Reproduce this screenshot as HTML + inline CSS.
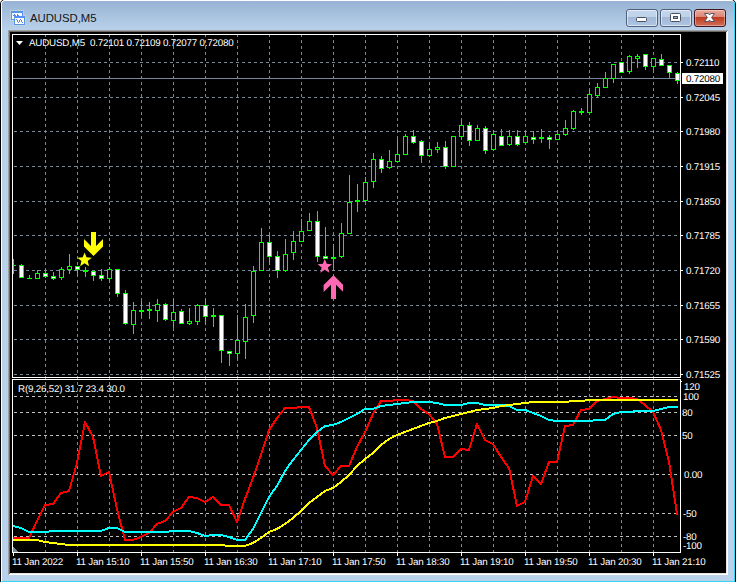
<!DOCTYPE html>
<html><head><meta charset="utf-8"><title>AUDUSD,M5</title>
<style>
html,body{margin:0;padding:0;background:#fff;}
body{width:738px;height:582px;position:relative;overflow:hidden;font-family:"Liberation Sans",sans-serif;}
.abs{position:absolute;}
#win{position:absolute;left:0;top:-1px;width:736px;height:590px;box-sizing:border-box;border:1px solid #000;border-radius:5px 5px 0 0;background:#b9d1ea;overflow:hidden;}
#hl{position:absolute;left:0;top:0;width:734px;height:582px;box-sizing:border-box;border-left:1px solid #fff;border-top:1px solid #fff;border-right:1px solid #33d6f5;border-bottom:1px solid #33d6f5;border-radius:4px 4px 0 0;}
#cap{position:absolute;left:1px;top:1px;width:732px;height:29px;background:linear-gradient(#97b2d2,#9ab6d6 8%,#b9d1ea 100%);border-radius:3px 3px 0 0;}
.t{position:absolute;font-size:9.8px;letter-spacing:-0.2px;line-height:11px;height:11px;margin-top:-1px;white-space:pre;text-rendering:geometricPrecision;}
#title{position:absolute;left:30px;top:11px;font-size:11.3px;line-height:14px;color:#151515;white-space:pre;}
.btn{position:absolute;top:9px;width:32px;height:18px;box-sizing:border-box;border:1px solid #505f7c;border-radius:3px;background:linear-gradient(#c3d6ec 0,#bdd1e8 45%,#a1b9d7 46%,#aec6e1 100%);box-shadow:inset 0 0 0 1px rgba(255,255,255,.55);}
#bclose{border-color:#431422;background:linear-gradient(#e9a99b 0,#dc8573 45%,#c03a1e 46%,#cf6e57 100%);box-shadow:inset 0 0 0 1px rgba(255,255,255,.35);}
</style></head><body>
<div id="win"><div id="cap"></div><div id="hl"></div></div>
<!-- icon -->
<svg class="abs" style="left:9px;top:9px" width="18" height="18" viewBox="9 9 18 18" shape-rendering="crispEdges">
<rect x="10" y="10" width="14" height="11" fill="#c5d8ef" opacity=".6"/>
<rect x="13" y="15" width="13" height="11" fill="#c5d8ef" opacity=".6"/>
<rect x="11" y="11" width="12" height="9" rx="1" fill="#5a90fa"/><path d="M12 11.5h10M14 16.5h0" stroke="#53a58c" stroke-dasharray="1 2" fill="none"/>
<rect x="12" y="13" width="10" height="6" fill="#fff"/>
<rect x="14" y="16" width="11" height="9" rx="1" fill="#5a90fa"/><path d="M15 16.5h9M15 24.500h9" stroke="#53a58c" stroke-dasharray="1 2" fill="none"/><path d="M14.5 18v6M24.500 18v6M11.5 13v6" stroke="#53a58c" stroke-dasharray="1 2" fill="none"/>
<rect x="15" y="18" width="9" height="6" fill="#fff"/>
<path d="M13 15.5h3M14 14.5h1M17 14.5h1M17 15.5h2M18 16.5h2" stroke="#4f86f7" fill="none"/>
<path d="M16 19.5h1M17 20.5h1M17 21.5h1M18 22.5h1M19 21.5h1M19 20.5h1M20 19.5h1M21 20.5h1M21 21.5h1M22 22.5h1" stroke="#4f86f7" fill="none"/>
</svg>
<div id="title">AUDUSD,M5</div>
<div class="btn" style="left:626px"></div>
<div class="btn" style="left:660px"></div>
<div class="btn" id="bclose" style="left:694px"></div>
<svg class="abs" style="left:626px;top:9px" width="100" height="18" viewBox="626 9 100 18">
<rect x="636.5" y="17.5" width="10" height="4" rx="1" fill="#fff" stroke="#4a4f5c"/>
<rect x="670.5" y="13.5" width="10" height="8" rx="1" fill="#fff" stroke="#4a4f5c"/>
<rect x="673.5" y="16.5" width="4" height="2" fill="#8fb0d6" stroke="#4a4f5c"/>
<path d="M704.5 13.5H708.300L709.5 15 710.7 13.5H714.500L711.6 17.5 714.500 21.5H710.700L709.5 20 708.3 21.5H704.500L707.4 17.5Z" fill="#fff" stroke="#4a475c" stroke-width="0.9" stroke-linejoin="round"/>
</svg>
<!-- client edge -->
<div class="abs" style="left:8px;top:30px;width:720px;height:545px;background:#a0a0a0"></div>
<div class="abs" style="left:9px;top:31px;width:719px;height:544px;background:#fff"></div>
<div class="abs" style="left:9px;top:31px;width:718px;height:543px;background:#696969"></div>
<div class="abs" style="left:10px;top:32px;width:717px;height:542px;background:#e3e3e3"></div>
<div class="abs" style="left:10px;top:32px;width:716px;height:541px;background:#000"></div>
<svg class="abs" style="left:0;top:0" width="738" height="582" viewBox="0 0 738 582" shape-rendering="crispEdges">
<line x1="45.5" y1="34" x2="45.5" y2="552" stroke="#778899" stroke-dasharray="3 3"/>
<line x1="77.5" y1="34" x2="77.5" y2="552" stroke="#778899" stroke-dasharray="3 3"/>
<line x1="109.5" y1="34" x2="109.5" y2="552" stroke="#778899" stroke-dasharray="3 3"/>
<line x1="141.5" y1="34" x2="141.5" y2="552" stroke="#778899" stroke-dasharray="3 3"/>
<line x1="173.5" y1="34" x2="173.5" y2="552" stroke="#778899" stroke-dasharray="3 3"/>
<line x1="205.5" y1="34" x2="205.5" y2="552" stroke="#778899" stroke-dasharray="3 3"/>
<line x1="237.5" y1="34" x2="237.5" y2="552" stroke="#778899" stroke-dasharray="3 3"/>
<line x1="269.5" y1="34" x2="269.5" y2="552" stroke="#778899" stroke-dasharray="3 3"/>
<line x1="301.5" y1="34" x2="301.5" y2="552" stroke="#778899" stroke-dasharray="3 3"/>
<line x1="333.5" y1="34" x2="333.5" y2="552" stroke="#778899" stroke-dasharray="3 3"/>
<line x1="365.5" y1="34" x2="365.5" y2="552" stroke="#778899" stroke-dasharray="3 3"/>
<line x1="397.5" y1="34" x2="397.5" y2="552" stroke="#778899" stroke-dasharray="3 3"/>
<line x1="429.5" y1="34" x2="429.5" y2="552" stroke="#778899" stroke-dasharray="3 3"/>
<line x1="461.5" y1="34" x2="461.5" y2="552" stroke="#778899" stroke-dasharray="3 3"/>
<line x1="493.5" y1="34" x2="493.5" y2="552" stroke="#778899" stroke-dasharray="3 3"/>
<line x1="525.5" y1="34" x2="525.5" y2="552" stroke="#778899" stroke-dasharray="3 3"/>
<line x1="557.5" y1="34" x2="557.5" y2="552" stroke="#778899" stroke-dasharray="3 3"/>
<line x1="589.5" y1="34" x2="589.5" y2="552" stroke="#778899" stroke-dasharray="3 3"/>
<line x1="621.5" y1="34" x2="621.5" y2="552" stroke="#778899" stroke-dasharray="3 3"/>
<line x1="653.5" y1="34" x2="653.5" y2="552" stroke="#778899" stroke-dasharray="3 3"/>
<line x1="14" y1="62.5" x2="680" y2="62.5" stroke="#778899" stroke-dasharray="3 3"/>
<line x1="14" y1="97.5" x2="680" y2="97.5" stroke="#778899" stroke-dasharray="3 3"/>
<line x1="14" y1="131.5" x2="680" y2="131.5" stroke="#778899" stroke-dasharray="3 3"/>
<line x1="14" y1="166.5" x2="680" y2="166.5" stroke="#778899" stroke-dasharray="3 3"/>
<line x1="14" y1="201.5" x2="680" y2="201.5" stroke="#778899" stroke-dasharray="3 3"/>
<line x1="14" y1="235.5" x2="680" y2="235.5" stroke="#778899" stroke-dasharray="3 3"/>
<line x1="14" y1="270.5" x2="680" y2="270.5" stroke="#778899" stroke-dasharray="3 3"/>
<line x1="14" y1="305.5" x2="680" y2="305.5" stroke="#778899" stroke-dasharray="3 3"/>
<line x1="14" y1="339.5" x2="680" y2="339.5" stroke="#778899" stroke-dasharray="3 3"/>
<line x1="14" y1="374.5" x2="680" y2="374.5" stroke="#778899" stroke-dasharray="3 3"/>
<line x1="14" y1="396.5" x2="680" y2="396.5" stroke="#c0c0c0" stroke-dasharray="3 3"/>
<line x1="14" y1="412.5" x2="680" y2="412.5" stroke="#c0c0c0" stroke-dasharray="3 3"/>
<line x1="14" y1="435.5" x2="680" y2="435.5" stroke="#c0c0c0" stroke-dasharray="3 3"/>
<line x1="14" y1="474.5" x2="680" y2="474.5" stroke="#c0c0c0" stroke-dasharray="3 3"/>
<line x1="14" y1="513.5" x2="680" y2="513.5" stroke="#c0c0c0" stroke-dasharray="3 3"/>
<line x1="14" y1="536.5" x2="680" y2="536.5" stroke="#c0c0c0" stroke-dasharray="3 3"/>
<rect x="13" y="78" width="667" height="1" fill="#778899"/>
<rect x="13" y="259" width="1" height="15" fill="#00ff00"/>
<rect x="13" y="265" width="3" height="1" fill="#00ff00"/>
<rect x="21" y="264" width="1" height="14" fill="#00ff00"/>
<rect x="19" y="265" width="5" height="13" fill="#00ff00"/>
<rect x="20" y="266" width="3" height="11" fill="#ffffff"/>
<rect x="29" y="275" width="1" height="4" fill="#00ff00"/>
<rect x="27" y="278" width="5" height="1" fill="#00ff00"/>
<rect x="37" y="270" width="1" height="9" fill="#00ff00"/>
<rect x="35" y="273" width="5" height="6" fill="#00ff00"/>
<rect x="36" y="274" width="3" height="4" fill="#000000"/>
<rect x="45" y="269" width="1" height="9" fill="#00ff00"/>
<rect x="43" y="273" width="5" height="4" fill="#00ff00"/>
<rect x="44" y="274" width="3" height="2" fill="#ffffff"/>
<rect x="53" y="272" width="1" height="8" fill="#00ff00"/>
<rect x="51" y="276" width="5" height="3" fill="#00ff00"/>
<rect x="52" y="277" width="3" height="1" fill="#ffffff"/>
<rect x="61" y="267" width="1" height="13" fill="#00ff00"/>
<rect x="59" y="269" width="5" height="9" fill="#00ff00"/>
<rect x="60" y="270" width="3" height="7" fill="#000000"/>
<rect x="69" y="254" width="1" height="20" fill="#00ff00"/>
<rect x="67" y="266" width="5" height="4" fill="#00ff00"/>
<rect x="68" y="267" width="3" height="2" fill="#000000"/>
<rect x="77" y="266" width="1" height="10" fill="#00ff00"/>
<rect x="75" y="266" width="5" height="4" fill="#00ff00"/>
<rect x="76" y="267" width="3" height="2" fill="#ffffff"/>
<rect x="85" y="267" width="1" height="10" fill="#00ff00"/>
<rect x="83" y="270" width="5" height="2" fill="#00ff00"/>
<rect x="93" y="271" width="1" height="10" fill="#00ff00"/>
<rect x="91" y="271" width="5" height="5" fill="#00ff00"/>
<rect x="92" y="272" width="3" height="3" fill="#ffffff"/>
<rect x="101" y="269" width="1" height="12" fill="#00ff00"/>
<rect x="99" y="275" width="5" height="4" fill="#00ff00"/>
<rect x="100" y="276" width="3" height="2" fill="#ffffff"/>
<rect x="109" y="267" width="1" height="14" fill="#00ff00"/>
<rect x="107" y="269" width="5" height="10" fill="#00ff00"/>
<rect x="108" y="270" width="3" height="8" fill="#000000"/>
<rect x="117" y="269" width="1" height="28" fill="#00ff00"/>
<rect x="115" y="269" width="5" height="25" fill="#00ff00"/>
<rect x="116" y="270" width="3" height="23" fill="#ffffff"/>
<rect x="125" y="290" width="1" height="35" fill="#00ff00"/>
<rect x="123" y="293" width="5" height="31" fill="#00ff00"/>
<rect x="124" y="294" width="3" height="29" fill="#ffffff"/>
<rect x="133" y="302" width="1" height="32" fill="#00ff00"/>
<rect x="131" y="310" width="5" height="15" fill="#00ff00"/>
<rect x="132" y="311" width="3" height="13" fill="#000000"/>
<rect x="141" y="301" width="1" height="16" fill="#00ff00"/>
<rect x="139" y="310" width="5" height="2" fill="#00ff00"/>
<rect x="149" y="302" width="1" height="17" fill="#00ff00"/>
<rect x="147" y="309" width="5" height="2" fill="#00ff00"/>
<rect x="157" y="299" width="1" height="23" fill="#00ff00"/>
<rect x="155" y="304" width="5" height="7" fill="#00ff00"/>
<rect x="156" y="305" width="3" height="5" fill="#000000"/>
<rect x="165" y="303" width="1" height="18" fill="#00ff00"/>
<rect x="163" y="304" width="5" height="16" fill="#00ff00"/>
<rect x="164" y="305" width="3" height="14" fill="#ffffff"/>
<rect x="173" y="299" width="1" height="29" fill="#00ff00"/>
<rect x="171" y="312" width="5" height="9" fill="#00ff00"/>
<rect x="172" y="313" width="3" height="7" fill="#000000"/>
<rect x="181" y="309" width="1" height="15" fill="#00ff00"/>
<rect x="179" y="311" width="5" height="13" fill="#00ff00"/>
<rect x="180" y="312" width="3" height="11" fill="#ffffff"/>
<rect x="189" y="308" width="1" height="17" fill="#00ff00"/>
<rect x="187" y="321" width="5" height="3" fill="#00ff00"/>
<rect x="188" y="322" width="3" height="1" fill="#000000"/>
<rect x="197" y="304" width="1" height="21" fill="#00ff00"/>
<rect x="195" y="305" width="5" height="17" fill="#00ff00"/>
<rect x="196" y="306" width="3" height="15" fill="#000000"/>
<rect x="205" y="299" width="1" height="26" fill="#00ff00"/>
<rect x="203" y="305" width="5" height="12" fill="#00ff00"/>
<rect x="204" y="306" width="3" height="10" fill="#ffffff"/>
<rect x="213" y="308" width="1" height="19" fill="#00ff00"/>
<rect x="211" y="315" width="5" height="2" fill="#00ff00"/>
<rect x="221" y="315" width="1" height="48" fill="#00ff00"/>
<rect x="219" y="315" width="5" height="36" fill="#00ff00"/>
<rect x="220" y="316" width="3" height="34" fill="#ffffff"/>
<rect x="229" y="351" width="1" height="15" fill="#00ff00"/>
<rect x="227" y="351" width="5" height="3" fill="#00ff00"/>
<rect x="228" y="352" width="3" height="1" fill="#ffffff"/>
<rect x="237" y="315" width="1" height="46" fill="#00ff00"/>
<rect x="235" y="340" width="5" height="14" fill="#00ff00"/>
<rect x="236" y="341" width="3" height="12" fill="#000000"/>
<rect x="245" y="304" width="1" height="55" fill="#00ff00"/>
<rect x="243" y="317" width="5" height="25" fill="#00ff00"/>
<rect x="244" y="318" width="3" height="23" fill="#000000"/>
<rect x="253" y="266" width="1" height="57" fill="#00ff00"/>
<rect x="251" y="271" width="5" height="45" fill="#00ff00"/>
<rect x="252" y="272" width="3" height="43" fill="#000000"/>
<rect x="261" y="228" width="1" height="43" fill="#00ff00"/>
<rect x="259" y="242" width="5" height="29" fill="#00ff00"/>
<rect x="260" y="243" width="3" height="27" fill="#000000"/>
<rect x="269" y="234" width="1" height="31" fill="#00ff00"/>
<rect x="267" y="242" width="5" height="15" fill="#00ff00"/>
<rect x="268" y="243" width="3" height="13" fill="#ffffff"/>
<rect x="277" y="251" width="1" height="27" fill="#00ff00"/>
<rect x="275" y="256" width="5" height="15" fill="#00ff00"/>
<rect x="276" y="257" width="3" height="13" fill="#ffffff"/>
<rect x="285" y="239" width="1" height="33" fill="#00ff00"/>
<rect x="283" y="254" width="5" height="17" fill="#00ff00"/>
<rect x="284" y="255" width="3" height="15" fill="#000000"/>
<rect x="293" y="231" width="1" height="29" fill="#00ff00"/>
<rect x="291" y="241" width="5" height="12" fill="#00ff00"/>
<rect x="292" y="242" width="3" height="10" fill="#000000"/>
<rect x="301" y="219" width="1" height="23" fill="#00ff00"/>
<rect x="299" y="231" width="5" height="11" fill="#00ff00"/>
<rect x="300" y="232" width="3" height="9" fill="#000000"/>
<rect x="309" y="213" width="1" height="18" fill="#00ff00"/>
<rect x="307" y="221" width="5" height="10" fill="#00ff00"/>
<rect x="308" y="222" width="3" height="8" fill="#000000"/>
<rect x="317" y="211" width="1" height="51" fill="#00ff00"/>
<rect x="315" y="221" width="5" height="36" fill="#00ff00"/>
<rect x="316" y="222" width="3" height="34" fill="#ffffff"/>
<rect x="325" y="227" width="1" height="32" fill="#00ff00"/>
<rect x="323" y="256" width="5" height="3" fill="#00ff00"/>
<rect x="324" y="257" width="3" height="1" fill="#ffffff"/>
<rect x="333" y="244" width="1" height="27" fill="#00ff00"/>
<rect x="331" y="257" width="5" height="2" fill="#00ff00"/>
<rect x="341" y="223" width="1" height="35" fill="#00ff00"/>
<rect x="339" y="233" width="5" height="24" fill="#00ff00"/>
<rect x="340" y="234" width="3" height="22" fill="#000000"/>
<rect x="349" y="175" width="1" height="59" fill="#00ff00"/>
<rect x="347" y="202" width="5" height="32" fill="#00ff00"/>
<rect x="348" y="203" width="3" height="30" fill="#000000"/>
<rect x="357" y="184" width="1" height="28" fill="#00ff00"/>
<rect x="355" y="200" width="5" height="2" fill="#00ff00"/>
<rect x="365" y="177" width="1" height="25" fill="#00ff00"/>
<rect x="363" y="182" width="5" height="19" fill="#00ff00"/>
<rect x="364" y="183" width="3" height="17" fill="#000000"/>
<rect x="373" y="153" width="1" height="35" fill="#00ff00"/>
<rect x="371" y="159" width="5" height="23" fill="#00ff00"/>
<rect x="372" y="160" width="3" height="21" fill="#000000"/>
<rect x="381" y="156" width="1" height="17" fill="#00ff00"/>
<rect x="379" y="159" width="5" height="10" fill="#00ff00"/>
<rect x="380" y="160" width="3" height="8" fill="#ffffff"/>
<rect x="389" y="150" width="1" height="19" fill="#00ff00"/>
<rect x="387" y="161" width="5" height="7" fill="#00ff00"/>
<rect x="388" y="162" width="3" height="5" fill="#000000"/>
<rect x="397" y="139" width="1" height="23" fill="#00ff00"/>
<rect x="395" y="154" width="5" height="8" fill="#00ff00"/>
<rect x="396" y="155" width="3" height="6" fill="#000000"/>
<rect x="405" y="134" width="1" height="21" fill="#00ff00"/>
<rect x="403" y="136" width="5" height="19" fill="#00ff00"/>
<rect x="404" y="137" width="3" height="17" fill="#000000"/>
<rect x="413" y="130" width="1" height="14" fill="#00ff00"/>
<rect x="411" y="136" width="5" height="7" fill="#00ff00"/>
<rect x="412" y="137" width="3" height="5" fill="#ffffff"/>
<rect x="421" y="140" width="1" height="23" fill="#00ff00"/>
<rect x="419" y="141" width="5" height="15" fill="#00ff00"/>
<rect x="420" y="142" width="3" height="13" fill="#ffffff"/>
<rect x="429" y="144" width="1" height="13" fill="#00ff00"/>
<rect x="427" y="149" width="5" height="7" fill="#00ff00"/>
<rect x="428" y="150" width="3" height="5" fill="#000000"/>
<rect x="437" y="142" width="1" height="11" fill="#00ff00"/>
<rect x="435" y="147" width="5" height="3" fill="#00ff00"/>
<rect x="436" y="148" width="3" height="1" fill="#000000"/>
<rect x="445" y="141" width="1" height="28" fill="#00ff00"/>
<rect x="443" y="147" width="5" height="20" fill="#00ff00"/>
<rect x="444" y="148" width="3" height="18" fill="#ffffff"/>
<rect x="453" y="136" width="1" height="31" fill="#00ff00"/>
<rect x="451" y="136" width="5" height="31" fill="#00ff00"/>
<rect x="452" y="137" width="3" height="29" fill="#000000"/>
<rect x="461" y="120" width="1" height="20" fill="#00ff00"/>
<rect x="459" y="125" width="5" height="12" fill="#00ff00"/>
<rect x="460" y="126" width="3" height="10" fill="#000000"/>
<rect x="469" y="122" width="1" height="24" fill="#00ff00"/>
<rect x="467" y="125" width="5" height="16" fill="#00ff00"/>
<rect x="468" y="126" width="3" height="14" fill="#ffffff"/>
<rect x="477" y="125" width="1" height="16" fill="#00ff00"/>
<rect x="475" y="128" width="5" height="13" fill="#00ff00"/>
<rect x="476" y="129" width="3" height="11" fill="#000000"/>
<rect x="485" y="126" width="1" height="28" fill="#00ff00"/>
<rect x="483" y="128" width="5" height="23" fill="#00ff00"/>
<rect x="484" y="129" width="3" height="21" fill="#ffffff"/>
<rect x="493" y="130" width="1" height="20" fill="#00ff00"/>
<rect x="491" y="134" width="5" height="16" fill="#00ff00"/>
<rect x="492" y="135" width="3" height="14" fill="#000000"/>
<rect x="501" y="129" width="1" height="17" fill="#00ff00"/>
<rect x="499" y="136" width="5" height="10" fill="#00ff00"/>
<rect x="500" y="137" width="3" height="8" fill="#ffffff"/>
<rect x="509" y="130" width="1" height="16" fill="#00ff00"/>
<rect x="507" y="136" width="5" height="9" fill="#00ff00"/>
<rect x="508" y="137" width="3" height="7" fill="#000000"/>
<rect x="517" y="130" width="1" height="16" fill="#00ff00"/>
<rect x="515" y="136" width="5" height="9" fill="#00ff00"/>
<rect x="516" y="137" width="3" height="7" fill="#ffffff"/>
<rect x="525" y="131" width="1" height="12" fill="#00ff00"/>
<rect x="523" y="136" width="5" height="7" fill="#00ff00"/>
<rect x="524" y="137" width="3" height="5" fill="#000000"/>
<rect x="533" y="131" width="1" height="13" fill="#00ff00"/>
<rect x="531" y="137" width="5" height="3" fill="#00ff00"/>
<rect x="532" y="138" width="3" height="1" fill="#ffffff"/>
<rect x="541" y="129" width="1" height="14" fill="#00ff00"/>
<rect x="539" y="137" width="5" height="2" fill="#00ff00"/>
<rect x="549" y="135" width="1" height="14" fill="#00ff00"/>
<rect x="547" y="137" width="5" height="3" fill="#00ff00"/>
<rect x="548" y="138" width="3" height="1" fill="#ffffff"/>
<rect x="557" y="130" width="1" height="10" fill="#00ff00"/>
<rect x="555" y="134" width="5" height="6" fill="#00ff00"/>
<rect x="556" y="135" width="3" height="4" fill="#000000"/>
<rect x="565" y="120" width="1" height="16" fill="#00ff00"/>
<rect x="563" y="128" width="5" height="7" fill="#00ff00"/>
<rect x="564" y="129" width="3" height="5" fill="#000000"/>
<rect x="573" y="110" width="1" height="20" fill="#00ff00"/>
<rect x="571" y="111" width="5" height="18" fill="#00ff00"/>
<rect x="572" y="112" width="3" height="16" fill="#000000"/>
<rect x="581" y="108" width="1" height="7" fill="#00ff00"/>
<rect x="579" y="111" width="5" height="2" fill="#00ff00"/>
<rect x="589" y="90" width="1" height="23" fill="#00ff00"/>
<rect x="587" y="94" width="5" height="19" fill="#00ff00"/>
<rect x="588" y="95" width="3" height="17" fill="#000000"/>
<rect x="597" y="83" width="1" height="14" fill="#00ff00"/>
<rect x="595" y="87" width="5" height="9" fill="#00ff00"/>
<rect x="596" y="88" width="3" height="7" fill="#000000"/>
<rect x="605" y="72" width="1" height="16" fill="#00ff00"/>
<rect x="603" y="78" width="5" height="10" fill="#00ff00"/>
<rect x="604" y="79" width="3" height="8" fill="#000000"/>
<rect x="613" y="64" width="1" height="19" fill="#00ff00"/>
<rect x="611" y="64" width="5" height="15" fill="#00ff00"/>
<rect x="612" y="65" width="3" height="13" fill="#000000"/>
<rect x="621" y="62" width="1" height="11" fill="#00ff00"/>
<rect x="619" y="62" width="5" height="11" fill="#00ff00"/>
<rect x="620" y="63" width="3" height="9" fill="#ffffff"/>
<rect x="629" y="55" width="1" height="19" fill="#00ff00"/>
<rect x="627" y="56" width="5" height="16" fill="#00ff00"/>
<rect x="628" y="57" width="3" height="14" fill="#000000"/>
<rect x="637" y="54" width="1" height="14" fill="#00ff00"/>
<rect x="635" y="56" width="5" height="3" fill="#00ff00"/>
<rect x="636" y="57" width="3" height="1" fill="#000000"/>
<rect x="645" y="54" width="1" height="16" fill="#00ff00"/>
<rect x="643" y="54" width="5" height="13" fill="#00ff00"/>
<rect x="644" y="55" width="3" height="11" fill="#ffffff"/>
<rect x="653" y="58" width="1" height="12" fill="#00ff00"/>
<rect x="651" y="58" width="5" height="9" fill="#00ff00"/>
<rect x="652" y="59" width="3" height="7" fill="#000000"/>
<rect x="661" y="54" width="1" height="12" fill="#00ff00"/>
<rect x="659" y="59" width="5" height="7" fill="#00ff00"/>
<rect x="660" y="60" width="3" height="5" fill="#ffffff"/>
<rect x="669" y="65" width="1" height="13" fill="#00ff00"/>
<rect x="667" y="65" width="5" height="8" fill="#00ff00"/>
<rect x="668" y="66" width="3" height="6" fill="#ffffff"/>
<rect x="677" y="72" width="1" height="12" fill="#00ff00"/>
<rect x="675" y="73" width="5" height="8" fill="#00ff00"/>
<rect x="676" y="74" width="3" height="6" fill="#ffffff"/>
<rect x="681" y="62" width="2" height="1" fill="#fff"/>
<rect x="681" y="97" width="2" height="1" fill="#fff"/>
<rect x="681" y="131" width="2" height="1" fill="#fff"/>
<rect x="681" y="166" width="2" height="1" fill="#fff"/>
<rect x="681" y="201" width="2" height="1" fill="#fff"/>
<rect x="681" y="235" width="2" height="1" fill="#fff"/>
<rect x="681" y="270" width="2" height="1" fill="#fff"/>
<rect x="681" y="305" width="2" height="1" fill="#fff"/>
<rect x="681" y="339" width="2" height="1" fill="#fff"/>
<rect x="681" y="374" width="2" height="1" fill="#fff"/>
<rect x="681" y="381" width="1" height="1" fill="#fff"/>
<rect x="13" y="553" width="1" height="3" fill="#fff"/>
<rect x="77" y="553" width="1" height="3" fill="#fff"/>
<rect x="141" y="553" width="1" height="3" fill="#fff"/>
<rect x="205" y="553" width="1" height="3" fill="#fff"/>
<rect x="269" y="553" width="1" height="3" fill="#fff"/>
<rect x="333" y="553" width="1" height="3" fill="#fff"/>
<rect x="397" y="553" width="1" height="3" fill="#fff"/>
<rect x="461" y="553" width="1" height="3" fill="#fff"/>
<rect x="525" y="553" width="1" height="3" fill="#fff"/>
<rect x="589" y="553" width="1" height="3" fill="#fff"/>
<rect x="653" y="553" width="1" height="3" fill="#fff"/>
<polyline points="13,538 21,538 29,538 37,521 45,505 53,504 61,493 69,491 77,463 85,422 93,437 101,476 109,472 117,509 125,540 133,540 141,537 149,533 157,524 165,521 173,512 181,508 189,497 197,498 205,502 213,497 221,505 229,505 237,522 245,499 253,478 261,455 269,430 277,418 285,408 293,408 301,407 309,407 317,428 325,466 333,475 341,466 349,466 357,447 365,432 373,414 381,401 389,401 397,400 405,400 413,401 421,409 429,414 437,424 445,457 453,457 461,449 469,450 477,424 485,440 493,444 501,457 509,468 517,506 525,502 533,476 541,484 549,462 557,462 565,426 573,425 581,410 589,409 597,401 605,399 613,397 621,398 629,398 637,399 645,405 653,412 661,430 669,462 677,514" fill="none" stroke="#ff0000" stroke-width="2" stroke-linejoin="round" stroke-linecap="square" shape-rendering="crispEdges"/>
<polyline points="13,526 21,528 29,532 37,532 45,532 53,531 61,531 69,531 77,531 85,531 93,531 101,531 109,528 117,528 125,532 133,532 141,532 149,532 157,532 165,532 173,531 181,531 189,531 197,533 205,536 213,535 221,535 229,537 237,540 245,540 253,529 261,513 269,497 277,486 285,471 293,460 301,450 309,440 317,432 325,426 333,425 341,422 349,418 357,414 365,409 373,409 381,406 389,405 397,404 405,403 413,402 421,402 429,402 437,403 445,405 453,405 461,405 469,403 477,403 485,405 493,405 501,405 509,406 517,410 525,410 533,413 541,416 549,420 557,421 565,421 573,421 581,421 589,421 597,420 605,420 613,414 621,412 629,412 637,411 645,411 653,411 661,409 669,407 677,407" fill="none" stroke="#00ffff" stroke-width="2" stroke-linejoin="round" stroke-linecap="square" shape-rendering="crispEdges"/>
<polyline points="13,540 21,540 29,540 37,540 45,542 53,543 61,544 69,545 77,545 85,545 93,545 101,545 109,545 117,545 125,545 133,545 141,545 149,545 157,545 165,545 173,545 181,545 189,545 197,545 205,545 213,545 221,545 229,546 237,546 245,546 253,543 261,538 269,532 277,529 285,524 293,518 301,511 309,503 317,497 325,491 333,488 341,482 349,475 357,466 365,459 373,453 381,445 389,439 397,435 405,432 413,429 421,426 429,423 437,421 445,418 453,416 461,414 469,412 477,410 485,409 493,408 501,406 509,405 517,404 525,403 533,402 541,402 549,402 557,402 565,402 573,401 581,401 589,400 597,400 605,400 613,400 621,400 629,400 637,400 645,400 653,400 661,400 669,400 677,400" fill="none" stroke="#ffff00" stroke-width="2" stroke-linejoin="round" stroke-linecap="square" shape-rendering="crispEdges"/>
<rect x="12" y="34" width="669" height="1" fill="#fff"/>
<rect x="12" y="377" width="669" height="1" fill="#fff"/>
<rect x="12" y="34" width="1" height="344" fill="#fff"/>
<rect x="680" y="34" width="1" height="344" fill="#fff"/>
<rect x="12" y="379" width="669" height="1" fill="#fff"/>
<rect x="12" y="552" width="669" height="1" fill="#fff"/>
<rect x="12" y="379" width="1" height="174" fill="#fff"/>
<rect x="680" y="379" width="1" height="174" fill="#fff"/>
<polygon points="13,547 18,552 13,552" fill="#778899"/>
<polygon points="16,41 23,41 19.5,45" fill="#fff" shape-rendering="auto"/>
<polygon points="84.60,252.40 86.52,257.36 91.83,257.65 87.71,261.01 89.07,266.15 84.60,263.27 80.13,266.15 81.49,261.01 77.37,257.65 82.68,257.36" fill="#ffff00" shape-rendering="auto"/>
<polygon points="91,232 96,232 96,246 103,239 103,246.5 93.5,256 84,246.5 84,239 91,246" fill="#ffff00" shape-rendering="auto"/>
<polygon points="324.80,258.90 326.72,263.86 332.03,264.15 327.91,267.51 329.27,272.65 324.80,269.77 320.33,272.65 321.69,267.51 317.57,264.15 322.88,263.86" fill="#ff69b4" shape-rendering="auto"/>
<polygon points="333.5,275.3 343,284.8 343,291.8 336,284.8 336,299 331,299 331,284.8 323.6,292 323.6,285" fill="#ff69b4" shape-rendering="auto"/>
<rect x="682" y="73" width="41" height="11" fill="#fff"/>
</svg>
<div class="t" style="left:686px;top:59px;color:#fff">0.72110</div>
<div class="t" style="left:686px;top:94px;color:#fff">0.72045</div>
<div class="t" style="left:686px;top:128px;color:#fff">0.71980</div>
<div class="t" style="left:686px;top:163px;color:#fff">0.71915</div>
<div class="t" style="left:686px;top:198px;color:#fff">0.71850</div>
<div class="t" style="left:686px;top:232px;color:#fff">0.71785</div>
<div class="t" style="left:686px;top:267px;color:#fff">0.71720</div>
<div class="t" style="left:686px;top:302px;color:#fff">0.71655</div>
<div class="t" style="left:686px;top:336px;color:#fff">0.71590</div>
<div class="t" style="left:686px;top:371px;color:#fff">0.71525</div>
<div class="t" style="left:686px;top:75px;color:#000">0.72080</div>
<div class="t" style="left:684px;top:383px;color:#fff">120</div>
<div class="t" style="left:683px;top:393px;color:#fff">100</div>
<div class="t" style="left:682px;top:409px;color:#fff">80</div>
<div class="t" style="left:682px;top:432px;color:#fff">50</div>
<div class="t" style="left:684px;top:471px;color:#fff">0.00</div>
<div class="t" style="left:683px;top:510px;color:#fff">-50</div>
<div class="t" style="left:683px;top:533px;color:#fff">-80</div>
<div class="t" style="left:683px;top:542px;color:#fff">-100</div>
<div class="t" style="left:29px;top:39px;color:#fff">AUDUSD,M5&nbsp; 0.72101 0.72109 0.72077 0.72080</div>
<div class="t" style="left:18px;top:385px;color:#fff">R(9,26,52) 31.7 23.4 30.0</div>
<div class="t" style="left:12px;top:558px;color:#fff">11 Jan 2022</div>
<div class="t" style="left:76px;top:558px;color:#fff">11 Jan 15:10</div>
<div class="t" style="left:140px;top:558px;color:#fff">11 Jan 15:50</div>
<div class="t" style="left:204px;top:558px;color:#fff">11 Jan 16:30</div>
<div class="t" style="left:268px;top:558px;color:#fff">11 Jan 17:10</div>
<div class="t" style="left:332px;top:558px;color:#fff">11 Jan 17:50</div>
<div class="t" style="left:396px;top:558px;color:#fff">11 Jan 18:30</div>
<div class="t" style="left:460px;top:558px;color:#fff">11 Jan 19:10</div>
<div class="t" style="left:524px;top:558px;color:#fff">11 Jan 19:50</div>
<div class="t" style="left:588px;top:558px;color:#fff">11 Jan 20:30</div>
<div class="t" style="left:652px;top:558px;color:#fff">11 Jan 21:10</div>
</body></html>
